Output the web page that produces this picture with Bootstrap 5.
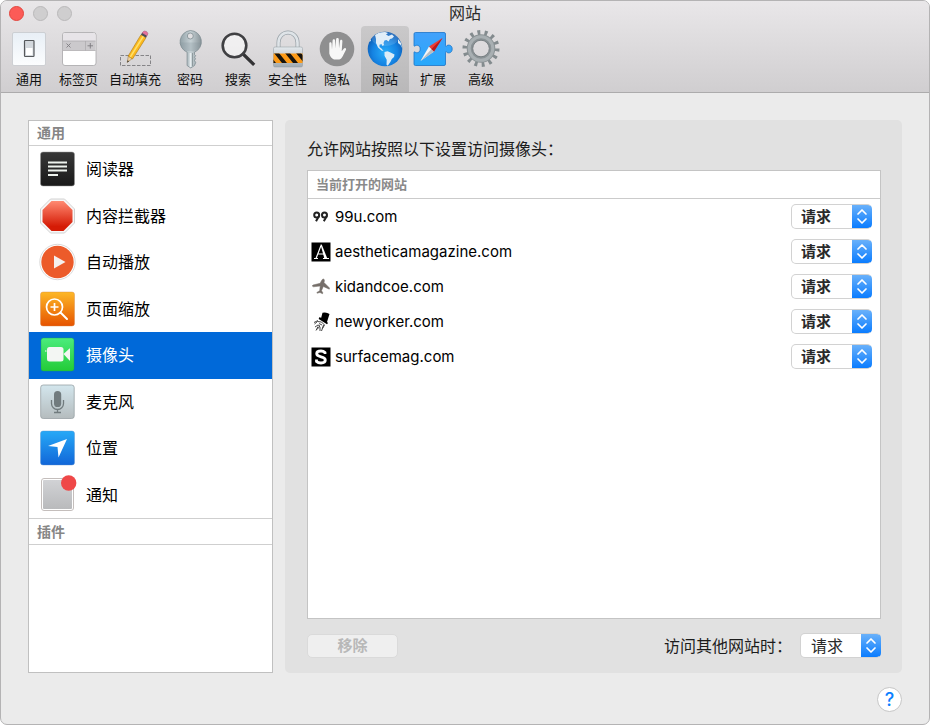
<!DOCTYPE html>
<html lang="zh-CN">
<head>
<meta charset="utf-8">
<meta name="viewport" content="width=device-width, initial-scale=1">
<title>网站</title>
<link href="https://cdn.jsdelivr.net/npm/bootstrap@5.3.0/dist/css/bootstrap.min.css" rel="stylesheet">
<style>
body{font-family:Inter,"Noto Sans CJK SC",sans-serif;font-size:16px;line-height:24px;color:#1c1c1c;background:#fff;padding:0 1px 1px 0}
.pref-window{border:1px solid #b4b3b4;border-radius:7px;background:#ebebeb;overflow:hidden;flex:1}
.pref-head{background:linear-gradient(#e9e7e9,#d0ced0);border-bottom:1px solid #acabac}
.pref-title{font-size:16px;line-height:25px;font-weight:400;color:#2b2b2b}
.lights{position:absolute;left:8px;top:5px;gap:9px}
.light{width:15px;height:15px;border-radius:50%;border:1px solid #b9b8b9;background:#cfcecf}
.light-close{background:#fc5b57;border-color:#e2463f}
.tools{padding:0 4px}
.tool{min-width:48px;height:66px;padding:3px 0 0;border:0;background:none;font-size:13px;line-height:20px;color:#111;border-radius:4px 4px 0 0;white-space:nowrap}
.tool-3{min-width:51px}
.tool-4{min-width:62px}
.tool.current{background:linear-gradient(#cac9ca,#b9b8b9)}
.tool svg{width:40px;height:40px;overflow:visible}
.pref-main{padding:27px 27px 14px;gap:12px}
.side{width:245px;flex:none;background:#fff;border:1px solid #c0c0c0}
.side-title{font-size:14px;line-height:24px;font-weight:700;color:#868686;padding:0 8px;margin:0;border-bottom:1px solid #cfcfcf}
.side-title.second{border-top:1px solid #cfcfcf;line-height:25px}
.side-list{min-height:372px}
.side-item{padding:0 9px;gap:10px;color:#000}
.side-item.current{background:#0069d9;color:#fff}
.side-item svg{width:38px;height:38px;overflow:visible;flex:none}
.panel{background:#e1e1e1;border-radius:5px;padding:17px 21px 15px 22px}
.panel-text{margin:0 0 9px}
.sites{background:#fff;border:1px solid #c4c4c4}
.sites-title{font-size:13px;line-height:27px;font-weight:700;color:#8a8a8a;padding:0 8px;margin:0;border-bottom:1px solid #cbcbcb}
.site{height:35px;padding:0 8px 0 3px;gap:4px;color:#000}
.site label{font-size:15px}
.site svg{width:20px;height:20px;flex:none}
.pop{appearance:none;width:81px;height:25px;flex:none;border:1px solid #d2d2d2;border-radius:5px;padding:0 22px 0 9px;font-size:15px;line-height:22px;font-weight:700;color:#2a2a2a;background:url("data:image/svg+xml,%3Csvg xmlns='http://www.w3.org/2000/svg' viewBox='0 0 20 25'%3E%3Cpath d='M6 10l4-4 4 4M6 15l4 4 4-4' fill='none' stroke='%23fff' stroke-width='1.7' stroke-linecap='round' stroke-linejoin='round'/%3E%3C/svg%3E") right center/20px 25px no-repeat border-box,linear-gradient(#6db3fa,#067aff) right center/20px 100% no-repeat border-box,#fff;border-right-color:transparent}
.pop-plain{font-size:16px;font-weight:400;padding-left:10px}
.remove{width:91px;height:24px;border:1px solid #dadada;border-radius:5px;background:#efefef;color:#b8b8b8;font-size:15px;line-height:20px;font-weight:700;padding:0}
.foot{padding-top:14px}
.pref-help{padding:0 27px 12px}
.help{width:25px;height:25px;border-radius:50%;border:1px solid #c6c6c6;background:#fff;color:#0a80ff;font-size:18px;line-height:22px;font-weight:500;padding:0}
</style>
</head>
<body class="min-vh-100 d-flex flex-column">
<div class="pref-window d-flex flex-column">
<header class="pref-head position-relative">
  <div class="lights d-flex"><button class="light light-close p-0" aria-label="关闭"></button><button class="light p-0" aria-label="最小化" disabled></button><button class="light p-0" aria-label="缩放" disabled></button></div>
  <h1 class="pref-title text-center m-0">网站</h1>
  <nav class="tools d-flex align-items-end pt-0" aria-label="偏好设置">
    <button class="tool d-flex flex-column align-items-center"><svg viewBox="0 0 40 40"><defs><linearGradient id="gw" x2="0" y2="1"><stop stop-color="#e8eff6"/><stop offset="1" stop-color="#fcfdfe"/></linearGradient></defs><rect x="3.5" y="3.5" width="33" height="33" rx="1.5" fill="url(#gw)" stroke="#c2c4c8" stroke-width=".7"/><rect x="15.5" y="11.5" width="9.5" height="16" rx=".8" fill="#d3d8dd" stroke="#55585b" stroke-width="1.2"/><rect x="17" y="19" width="6.5" height="7" fill="#fff"/></svg>通用</button>
    <button class="tool tool-3 d-flex flex-column align-items-center"><svg viewBox="0 0 40 40"><rect x="3.5" y="3.5" width="33.5" height="33" rx="2.5" fill="#fff" stroke="#a7a6a8" stroke-width=".8"/><path d="M4 12V6q0-2 2-2h28.500q2 0 2 2v6z" fill="#e7e4e8"/><path d="M4 12h32.500v9.500H4z" fill="#cbc9cc"/><path d="M26.500 12v9.500M4 12h32.500M4 21.500h32.500" stroke="#aaa8ab" stroke-width=".7"/><path d="M7.500 14.500l4 4m0-4l-4 4M31.300 14v5.500M28.500 16.800H34" stroke="#7e7c80" stroke-width=".9"/></svg>标签页</button>
    <button class="tool tool-4 d-flex flex-column align-items-center"><svg viewBox="0 0 40 40"><rect x="5.500" y="26.500" width="30" height="10" fill="none" stroke="#858487" stroke-dasharray="3.500 1.500"/><path d="M12.200 33.500l1.100-6.500 4 2.500z" fill="#efd1a0" stroke="#8b6b3b" stroke-width=".5"/><path d="M12.200 33.500l.5-2.200 1.300.9z" fill="#222"/><path d="M13.200 27L26 5.700l5 3L17.500 30z" fill="#fcb91e" stroke="#a97712" stroke-width=".6"/><path d="M15.300 28L28.500 7" stroke="#ffe169" stroke-width="1.500"/><path d="M26 5.700l1.100-1.900 5 3-1.100 1.900z" fill="#4f4d55"/><path d="M27.100 3.800Q29 .8 31.500 2.500t.6 4.300z" fill="#e8709b" stroke="#8e4c69" stroke-width=".4"/></svg>自动填充</button>
    <button class="tool d-flex flex-column align-items-center"><svg viewBox="0 0 40 40"><defs><linearGradient id="gk"><stop stop-color="#93a2a8"/><stop offset=".5" stop-color="#c5d0d4"/><stop offset="1" stop-color="#899499"/></linearGradient></defs><path d="M20.300 1.500a11.300 11.300 0 0 1 4.200 21.700v2.300l1.200 1.200-1.200 1.500 1 1.500-1 1.800 1.200 2-1.200 3-3.700 2.500-3.700-2.500V23.200A11.300 11.300 0 0 1 20.300 1.500z" fill="url(#gk)" stroke="#75858b" stroke-width=".7"/><path d="M20.500 24v14" stroke="#e8edef" stroke-width="1.700"/><path d="M22.500 24v13" stroke="#7b858a" stroke-width=".7"/><path d="M9.500 13.500h21.600a11 11 0 0 1-7 8.500h-7.600a11 11 0 0 1-7-8.500z" fill="#7e9199" opacity=".25"/><circle cx="20.300" cy="7" r="3" fill="#e0dfe1" stroke="#7d8b90" stroke-width=".8"/></svg>密码</button>
    <button class="tool d-flex flex-column align-items-center"><svg viewBox="0 0 40 40"><path d="M25 25l10 9.700" stroke="#333335" stroke-width="3.300" stroke-linecap="square"/><circle cx="16.500" cy="16.500" r="11.800" fill="#fff" fill-opacity=".55" stroke="#404043" stroke-width="2.600"/></svg>搜索</button>
    <button class="tool tool-3 d-flex flex-column align-items-center"><svg viewBox="0 0 40 40"><defs><linearGradient id="gl" x2="0" y2="1"><stop stop-color="#e4e9ed"/><stop offset="1" stop-color="#a1aab0"/></linearGradient><clipPath id="cl"><path d="M5.500 24.500h29V34h-29z"/></clipPath></defs><path d="M10.500 20v-6.500a9.500 10 0 0 1 19 0V20" fill="none" stroke="#98a1a7" stroke-width="4"/><path d="M10.500 20v-6.500a9.500 10 0 0 1 19 0V20" fill="none" stroke="#dfe4e8" stroke-width="2.600"/><rect x="5.500" y="18" width="29" height="20" rx="1.500" fill="url(#gl)" stroke="#8e989e" stroke-width=".5"/><g clip-path="url(#cl)"><path d="M5 24h30v11H5z" fill="#fb9a18"/><path d="M6 24h5l8 10h-5zM17 24h5l8 10h-5zM28 24h5l8 10h-5zM-5 24h5l8 10H3z" fill="#17140e"/></g></svg>安全性</button>
    <button class="tool d-flex flex-column align-items-center"><svg viewBox="0 0 40 40"><circle cx="20" cy="20" r="17.300" fill="#8f8f90"/><path d="M17 30.500c-2.500-1-4-3-4.700-6V14.500c0-1.700 2.200-1.700 2.300 0l.4 6 .6-9c.1-1.800 2.400-1.800 2.500 0l.4 8 .6-9.200c.1-1.900 2.600-1.900 2.700 0l.2 9.200 1-7.600c.3-1.800 2.500-1.500 2.400.3l-.7 10 2-2.400c1.200-1.600 3-.5 2.300 1l-3.300 6.500c-.8 1.600-1.700 2.700-3.400 3.200z" fill="#f7f7f7"/></svg>隐私</button>
    <button class="tool current d-flex flex-column align-items-center" aria-current="page"><svg viewBox="0 0 40 40"><defs><radialGradient id="gg" cx=".5" cy=".6" r=".6"><stop stop-color="#29adfa"/><stop offset=".6" stop-color="#1583e2"/><stop offset="1" stop-color="#0c57ae"/></radialGradient><clipPath id="cg"><circle cx="20" cy="20" r="17.300"/></clipPath></defs><circle cx="20" cy="20" r="17.300" fill="url(#gg)"/><g clip-path="url(#cg)" fill="#dcecf7"><path d="M10 6l4-2.500 6-.5 3 1-2 1.500 2.500 1.500 3.500-1.500 2 2-2 2-2 .5-1.500 2.500-2-1.500-2 .5-1 2.500.5 2-1.500 1-1-2-2 .8 0 2.200 2 1.500 2 2.500-2-.5-3.500-3-2-4.500 0-4z"/><path d="M19.500 23l3-.7 3 1.300 4 2-.5 2.500-2.200 2-1.300 2.700-2.700 4-1.300-1 .2-5-2.200-4z"/><path d="M33 10l3 4 1 5-1.500-3-2.500-2zM3.500 13l2-3.500.5 2.500z"/></g><ellipse cx="20" cy="10" rx="13" ry="7" fill="#fff" opacity=".14"/></svg>网站</button>
    <button class="tool d-flex flex-column align-items-center"><svg viewBox="0 0 40 40"><defs><linearGradient id="gp" x2="0" y2="1"><stop stop-color="#42a1fb"/><stop offset="1" stop-color="#26a8fb"/></linearGradient></defs><path d="M2.500 3.500h28.500q1.500 0 1.500 1.500v11.500q0 1 1 .7c.6-1.700 5.700-1.900 5.700 2.800s-5.100 4.500-5.700 2.800q-1-.3-1 .7V35q0 1.500-1.500 1.500h-28.500Q1 36.500 1 35V23.500q0-1 1-.5c1.500 1.500 5.200.8 5.200-3s-3.700-4.500-5.200-3q-1 .5-1-.5V5q0-1.500 1.500-1.500z" fill="url(#gp)" stroke="#1c73c6" stroke-width=".8"/><path d="M7.500 32L16 17.500l5 5z" fill="#f3f4f5"/><path d="M7.500 32L18.500 20l2.500 2.500z" fill="#b7bdc3"/><path d="M29.500 9L16 17.500l5 5z" fill="#ed3c36"/><path d="M29.500 9l-11 11 2.500 2.500z" fill="#b81a1d"/></svg>扩展</button>
    <button class="tool d-flex flex-column align-items-center"><svg viewBox="0 0 40 40"><circle cx="20" cy="19.500" r="16" fill="none" stroke="#838b8e" stroke-width="5" pathLength="28" stroke-dasharray=".8 1.200"/><circle cx="20" cy="19.500" r="11.300" fill="none" stroke="#8a9295" stroke-width="6"/><circle cx="20" cy="19.500" r="11.800" fill="none" stroke="#a8afb2" stroke-width="3"/><circle cx="20" cy="19.500" r="8.300" fill="none" stroke="#737b7e" stroke-width=".9"/></svg>高级</button>
  </nav>
</header>
<main class="pref-main d-flex flex-fill">
  <aside class="side d-flex flex-column">
    <h2 class="side-title">通用</h2>
    <nav class="side-list d-flex flex-column">
      <a href="#" class="side-item d-flex flex-fill align-items-center text-decoration-none"><svg viewBox="0 0 38 38"><defs><linearGradient id="s1" x2="0" y2="1"><stop stop-color="#383838"/><stop offset="1" stop-color="#191919"/></linearGradient></defs><rect x="2.500" y="2" width="34" height="34" rx="2.500" fill="url(#s1)" stroke="#999" stroke-width=".5"/><path d="M10 12.500h19M10 16.500h19M10 20.500h19M10 25h10" stroke="#eef3ee" stroke-width="1.900"/></svg>阅读器</a>
      <a href="#" class="side-item d-flex flex-fill align-items-center text-decoration-none"><svg viewBox="0 0 38 38"><defs><linearGradient id="s2" x2="0" y2="1"><stop stop-color="#ff8a72"/><stop offset=".85" stop-color="#d51b05"/></linearGradient></defs><path d="M12.500 2h14l10 10v14l-10 10h-14l-10-10V12z" fill="#f7f7f7" stroke="#c6c6c6" stroke-width=".8"/><path d="M13.500 4h12l9 9v12l-9 9h-12l-9-9V13z" fill="url(#s2)"/></svg>内容拦截器</a>
      <a href="#" class="side-item d-flex flex-fill align-items-center text-decoration-none"><svg viewBox="0 0 38 38"><circle cx="19.500" cy="19" r="17.700" fill="#fff" stroke="#cfcfcf" stroke-width=".8"/><circle cx="19.500" cy="19" r="16.200" fill="#ec5b2a"/><path d="M16 12.500l11.500 6.500L16 25.500z" fill="#f5f0ee"/></svg>自动播放</a>
      <a href="#" class="side-item d-flex flex-fill align-items-center text-decoration-none"><svg viewBox="0 0 38 38"><defs><linearGradient id="s4" x2="0" y2="1"><stop stop-color="#fdb827"/><stop offset="1" stop-color="#e65300"/></linearGradient></defs><rect x="2.500" y="2" width="34" height="34" rx="2.500" fill="url(#s4)" stroke="#d38345" stroke-width=".4"/><circle cx="16.500" cy="17" r="8" fill="none" stroke="#fff" stroke-width="1.700"/><path d="M22.500 22.500l6.500 6.500" stroke="#fff" stroke-width="2" stroke-linecap="round"/><path d="M16.500 13v8M12.500 17h8" stroke="#fff" stroke-width="1.700"/></svg>页面缩放</a>
      <a href="#" class="side-item current d-flex flex-fill align-items-center text-decoration-none" aria-current="page"><svg viewBox="0 0 38 38"><defs><linearGradient id="s5" x2="0" y2="1"><stop stop-color="#4bec7d"/><stop offset="1" stop-color="#23cb37"/></linearGradient></defs><rect x="3" y="2" width="33" height="33" rx="2.500" fill="url(#s5)" stroke="#22a04e" stroke-width=".4"/><rect x="9" y="11" width="16.500" height="14.500" rx="2.500" fill="#f3f6f3"/><path d="M25.500 18l6-5.500q.5-.4.500.3v11.400q0 .7-.5.300z" fill="#f3f6f3"/><circle cx="7.800" cy="15" r=".8" fill="#f3f6f3"/></svg>摄像头</a>
      <a href="#" class="side-item d-flex flex-fill align-items-center text-decoration-none"><svg viewBox="0 0 38 38"><defs><linearGradient id="s6" x2="0" y2="1"><stop stop-color="#d3e6ed"/><stop offset="1" stop-color="#b5bcbe"/></linearGradient></defs><rect x="2.700" y="2" width="33.500" height="33.500" rx="2.500" fill="url(#s6)" stroke="#98a1a4" stroke-width=".8"/><rect x="16" y="8" width="7.200" height="16" rx="3.600" fill="#717b7e"/><path d="M13.500 17v3.500a6 6 0 0 0 12 0V17M19.500 26.500v3M16 29.500h7" fill="none" stroke="#717b7e" stroke-width="1.300"/></svg>麦克风</a>
      <a href="#" class="side-item d-flex flex-fill align-items-center text-decoration-none"><svg viewBox="0 0 38 38"><defs><linearGradient id="s7" x2="0" y2="1"><stop stop-color="#27a9f7"/><stop offset="1" stop-color="#1166d8"/></linearGradient></defs><rect x="2.500" y="2" width="34" height="34" rx="2.500" fill="url(#s7)" stroke="#5c8fc9" stroke-width=".4"/><path d="M29 10L20.500 28.500l-1-10.500L10 17z" fill="#fff"/></svg>位置</a>
      <a href="#" class="side-item d-flex flex-fill align-items-center text-decoration-none"><svg viewBox="0 0 38 38"><defs><linearGradient id="s8" x2="0" y2="1"><stop stop-color="#d1d2d5"/><stop offset="1" stop-color="#b9babc"/></linearGradient></defs><rect x="3.500" y="2.500" width="32" height="32" rx="2.500" fill="#fff" stroke="#c4bebc"/><rect x="5" y="4" width="29" height="29" rx="1" fill="url(#s8)"/><circle cx="30.700" cy="7" r="7.700" fill="#ef4848"/></svg>通知</a>
    </nav>
    <h2 class="side-title second">插件</h2>
  </aside>
  <section class="panel d-flex flex-column flex-fill">
    <p class="panel-text">允许网站按照以下设置访问摄像头：</p>
    <div class="sites flex-fill">
      <h2 class="sites-title">当前打开的网站</h2>
      <div class="site d-flex align-items-center"><svg viewBox="0 0 20 20"><g fill="none" stroke="#222" stroke-width="2"><circle cx="5.700" cy="8" r="2.500"/><path d="M8 9l-3 5.200"/><circle cx="13.500" cy="8" r="2.500"/><path d="M15.800 9l-3 5.200"/></g></svg><label class="flex-fill" for="p1">99u.com</label><select class="pop" id="p1"><option>请求</option><option>拒绝</option><option>允许</option></select></div>
      <div class="site d-flex align-items-center"><svg viewBox="0 0 20 20"><path d="M.5.500h19v19H.5z" fill="#000"/><path d="M3 16.500h4M12 16.500h6M5 16.500L10 3.500M7 12h6" fill="none" stroke="#fff" stroke-width="1.200"/><path d="M9.500 2.500h1.200L16.500 17h-3z" fill="#fff"/></svg><label class="flex-fill" for="p2">aestheticamagazine.com</label><select class="pop" id="p2"><option>请求</option><option>拒绝</option><option>允许</option></select></div>
      <div class="site d-flex align-items-center"><svg viewBox="0 0 20 20"><path d="M12.500 2c1 .3 1.200 1.500.5 3.500l5.500 5.500-.2 1.200-6-2.700-1.800 4.200 1.500 2.300-.5.700-2.500-1.200-3 .7-.1-.8 2.800-1.700.5-4.700-6.700.8-1.300-.8.800-1 7.200-1.700C10.500 3.500 11.500 1.700 12.500 2z" fill="#756e69" stroke="#756e69" stroke-width=".5"/></svg><label class="flex-fill" for="p3">kidandcoe.com</label><select class="pop" id="p3"><option>请求</option><option>拒绝</option><option>允许</option></select></div>
      <div class="site d-flex align-items-center"><svg viewBox="0 0 20 20"><path d="M11.500.7q4-1 7 1.300L16 10l1 1-1 1.200L7.700 7l.5-1.700 2 .5z" fill="#000"/><path d="M3.500 12l3-2.500 4 .5 3 3-2 3.500M4 15l3-2 2 1-3 3.500M8 11.500l3 1.500M5 18.500l2-4M12.500 13l-2 6M3 10.500l4-2M9 15v4" fill="none" stroke="#333" stroke-width=".9"/></svg><label class="flex-fill" for="p4">newyorker.com</label><select class="pop" id="p4"><option>请求</option><option>拒绝</option><option>允许</option></select></div>
      <div class="site d-flex align-items-center"><svg viewBox="0 0 20 20"><path d="M.5.500h19v19H.5z" fill="#000"/><path d="M14 7V5.500Q12.500 4 10 4 5.700 4 5.700 6.800q0 2 4.300 3t4.300 3.200Q14.300 16 10 16q-3 0-4.500-1.500V12.500" fill="none" stroke="#fff" stroke-width="2.800"/></svg><label class="flex-fill" for="p5">surfacemag.com</label><select class="pop" id="p5"><option>请求</option><option>拒绝</option><option>允许</option></select></div>
    </div>
    <div class="foot d-flex align-items-center"><button class="remove" disabled>移除</button><label class="ms-auto me-2" for="p6">访问其他网站时：</label><select class="pop pop-plain" id="p6"><option>请求</option><option>拒绝</option><option>允许</option></select></div>
  </section>
</main>
<footer class="pref-help d-flex justify-content-end"><button class="help" aria-label="帮助">?</button></footer>
</div>
<script src="https://cdn.jsdelivr.net/npm/bootstrap@5.3.0/dist/js/bootstrap.bundle.min.js"></script>
</body>
</html>
